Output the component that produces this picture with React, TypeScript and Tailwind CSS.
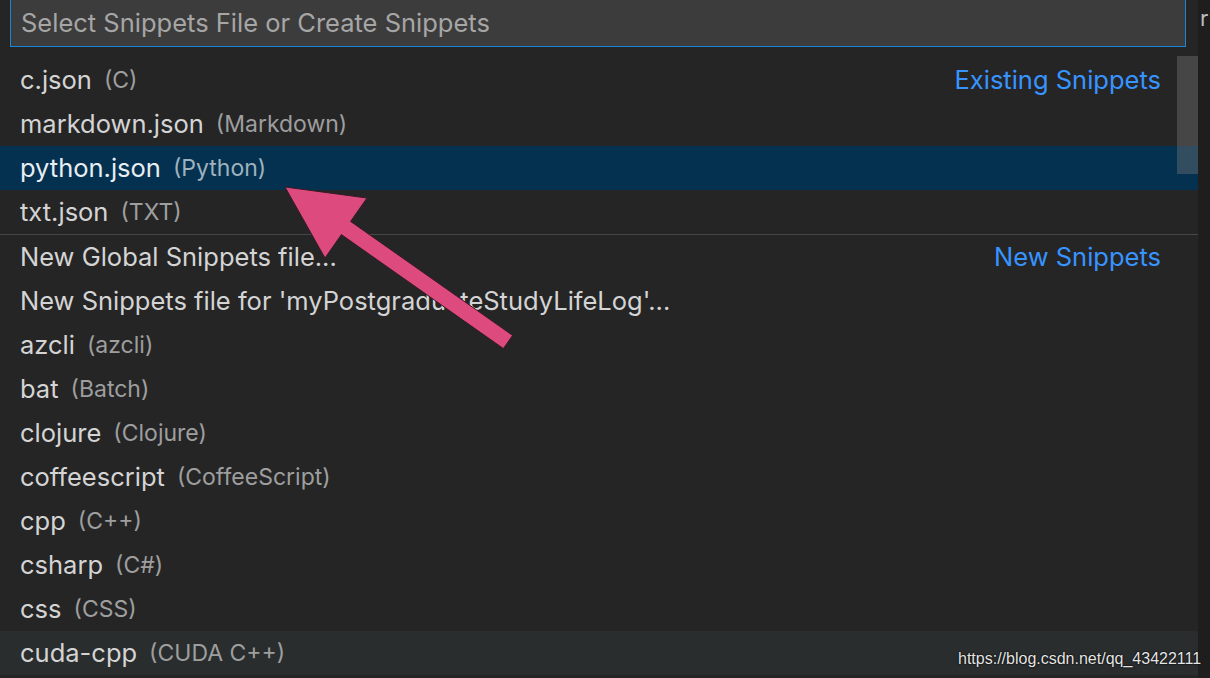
import React from 'react';

type Row = { label: string; desc?: string; tag?: string; selected?: boolean; hover?: boolean };

const existing: Row[] = [
  { label: 'c.json', desc: '(C)', tag: 'Existing Snippets' },
  { label: 'markdown.json', desc: '(Markdown)' },
  { label: 'python.json', desc: '(Python)', selected: true },
  { label: 'txt.json', desc: '(TXT)' },
];

const created: Row[] = [
  { label: 'New Global Snippets file...', tag: 'New Snippets' },
  { label: "New Snippets file for 'myPostgraduateStudyLifeLog'..." },
  { label: 'azcli', desc: '(azcli)' },
  { label: 'bat', desc: '(Batch)' },
  { label: 'clojure', desc: '(Clojure)' },
  { label: 'coffeescript', desc: '(CoffeeScript)' },
  { label: 'cpp', desc: '(C++)' },
  { label: 'csharp', desc: '(C#)' },
  { label: 'css', desc: '(CSS)' },
  { label: 'cuda-cpp', desc: '(CUDA C++)', hover: true },
];

const ListRow: React.FC<{ row: Row }> = ({ row }) => (
  <div
    className={`h-[44px] flex items-center pl-[20px] pr-[37px] ${
      row.selected ? 'bg-[#04314f] text-[#e8eef3]' : row.hover ? 'bg-[#2a2d2e] text-[#d4d4d4]' : 'text-[#d4d4d4]'
    }`}
  >
    <span className="text-[25.5px] whitespace-nowrap">{row.label}</span>
    {row.desc && (
      <span className={`ml-[12px] text-[23px] whitespace-nowrap ${row.selected ? 'text-[#9fb1bf]' : 'text-[#9e9e9e]'}`}>
        {row.desc}
      </span>
    )}
    <div className="flex-1" />
    {row.tag && <span className="text-[25.5px] text-[#3794ff] whitespace-nowrap">{row.tag}</span>}
  </div>
);

export default function App() {
  return (
    <div
      className="relative w-[1210px] h-[678px] flex bg-[#252526] overflow-hidden"
      style={{ fontFamily: 'Inter, "Liberation Sans", sans-serif' }}
    >
      <div className="w-[1198px] flex flex-col">
        {/* Input */}
        <div className="h-[58px] pl-[10px] pr-[12px]">
          <div className="h-[47px] border-x border-b border-[#1a85d6] bg-[#3c3c3c] flex items-center pl-[10px] text-[25.5px] text-[#a6a6a6] whitespace-nowrap">
            Select Snippets File or Create Snippets
          </div>
        </div>

        {/* List */}
        <div className="relative flex-1">
          {existing.map((r) => (
            <ListRow key={r.label} row={r} />
          ))}
          <div className="h-[1px] bg-[#474747]" />
          <div>
            {created.map((r) => (
              <ListRow key={r.label} row={r} />
            ))}
          </div>
          <div className="absolute left-[1177px] -top-[2px] w-[21px] h-[118px] bg-[rgba(121,121,121,0.4)]" />
        </div>
      </div>

      {/* right strip */}
      <div className="w-[12px] bg-[#1e1e1e] overflow-hidden">
        <div className="pl-[2px] pt-[2px] text-[22px] text-[#bdbdbd]">r</div>
      </div>

      {/* annotation arrow */}
      <svg className="absolute left-0 top-0 pointer-events-none" width="1210" height="678" viewBox="0 0 1210 678">
        <polygon
          points="285,187 367,198 350.6,221.4 512.6,335.4 503.4,348.6 341.4,234.6 325,258"
          fill="#dd4a7e"
          stroke="#3a1a26"
          strokeWidth="1"
          strokeLinejoin="round"
        />
      </svg>

      {/* watermark */}
      <div
        className="absolute left-[958px] top-[647px] text-[16px] text-[#e6e6e6] whitespace-nowrap"
        style={{ fontFamily: '"Liberation Sans", Arial, sans-serif', textShadow: '0 0 2px #000, 0 0 1px #000' }}
      >
        https://blog.csdn.net/qq_43422111
      </div>
    </div>
  );
}
